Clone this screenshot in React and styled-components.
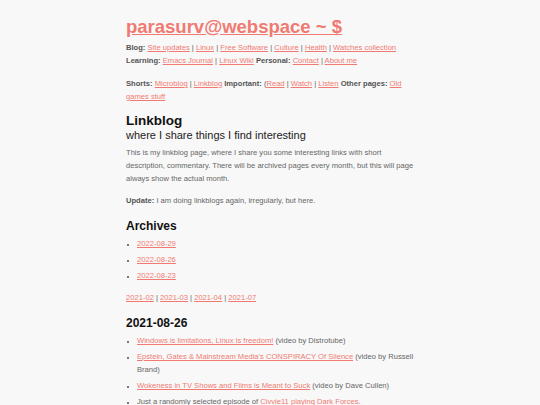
import React from 'react';
import styled, { createGlobalStyle } from 'styled-components';

const GlobalStyle = createGlobalStyle`
  html, body {
    margin: 0;
    padding: 0;
    background: #f8f8f8;
  }
  body {
    font-family: "Liberation Sans", Arial, sans-serif;
    color: #666;
  }
`;

const Page = styled.div`
  width: 288px;
  margin: 0 auto;
  padding-top: 16px;
  font-size: 7.6px;
  line-height: 13px;
`;

const Title = styled.a`
  display: block;
  font-size: 18.5px;
  line-height: 22px;
  font-weight: bold;
  color: #f07a72;
  text-decoration: underline;
  margin-bottom: 3px;
`;

const Nav = styled.div`
  margin-bottom: ${p => p.gap || 0}px;
`;

const A = styled.a`
  color: #f07a72;
  text-decoration: underline;
`;

const B = styled.b`
  color: #555;
`;

const H1 = styled.h1`
  margin: 0;
  font-size: 13.5px;
  line-height: 15px;
  color: #111;
`;

const Sub = styled.div`
  font-size: 11px;
  line-height: 14px;
  color: #222;
  margin-bottom: 4px;
`;

const P = styled.p`
  margin: 0 0 9px;
`;

const H2 = styled.h2`
  margin: 12px 0 4px;
  font-size: 12px;
  line-height: 14px;
  color: #111;
`;

const List = styled.ul`
  margin: 0 0 9px;
  padding-left: 11px;
  list-style: square;
  li::marker {
    font-size: 6px;
    color: #777;
  }
`;

const Item = styled.li`
  margin-bottom: 3px;
`;

const Sep = () => ' | ';

export default function App() {
  return (
    <>
      <GlobalStyle />
      <Page>
        <Title href="#">parasurv@webspace ~ $</Title>
        <Nav>
          <B>Blog:</B> <A href="#">Site updates</A><Sep /><A href="#">Linux</A><Sep /><A href="#">Free Software</A><Sep /><A href="#">Culture</A><Sep /><A href="#">Health</A><Sep /><A href="#">Watches collection</A>
        </Nav>
        <Nav gap={10}>
          <B>Learning:</B> <A href="#">Emacs Journal</A><Sep /><A href="#">Linux Wiki</A> <B>Personal:</B> <A href="#">Contact</A><Sep /><A href="#">About me</A>
        </Nav>
        <Nav gap={10}>
          <B>Shorts:</B> <A href="#">Microblog</A><Sep /><A href="#">Linkblog</A> <B>Important:</B> (<A href="#">Read</A><Sep /><A href="#">Watch</A><Sep /><A href="#">Listen</A> <B>Other pages:</B> <A href="#">Old games stuff</A>
        </Nav>
        <H1>Linkblog</H1>
        <Sub>where I share things I find interesting</Sub>
        <P>This is my linkblog page, where I share you some interesting links with short description, commentary. There will be archived pages every month, but this will page always show the actual month.</P>
        <P><B>Update:</B> I am doing linkblogs again, irregularly, but here.</P>
        <H2>Archives</H2>
        <List>
          <Item><A href="#">2022-08-29</A></Item>
          <Item><A href="#">2022-08-26</A></Item>
          <Item><A href="#">2022-08-23</A></Item>
        </List>
        <P>
          <A href="#">2021-02</A><Sep /><A href="#">2021-03</A><Sep /><A href="#">2021-04</A><Sep /><A href="#">2021-07</A>
        </P>
        <H2>2021-08-26</H2>
        <List>
          <Item><A href="#">Windows is limitations, Linux is freedom!</A> (video by Distrotube)</Item>
          <Item><A href="#">Epstein, Gates &amp; Mainstream Media's CONSPIRACY Of Silence</A> (video by Russell Brand)</Item>
          <Item><A href="#">Wokeness in TV Shows and Films is Meant to Suck</A> (video by Dave Cullen)</Item>
          <Item>Just a randomly selected episode of <A href="#">Civvie11 playing Dark Forces</A>.</Item>
        </List>
      </Page>
    </>
  );
}
